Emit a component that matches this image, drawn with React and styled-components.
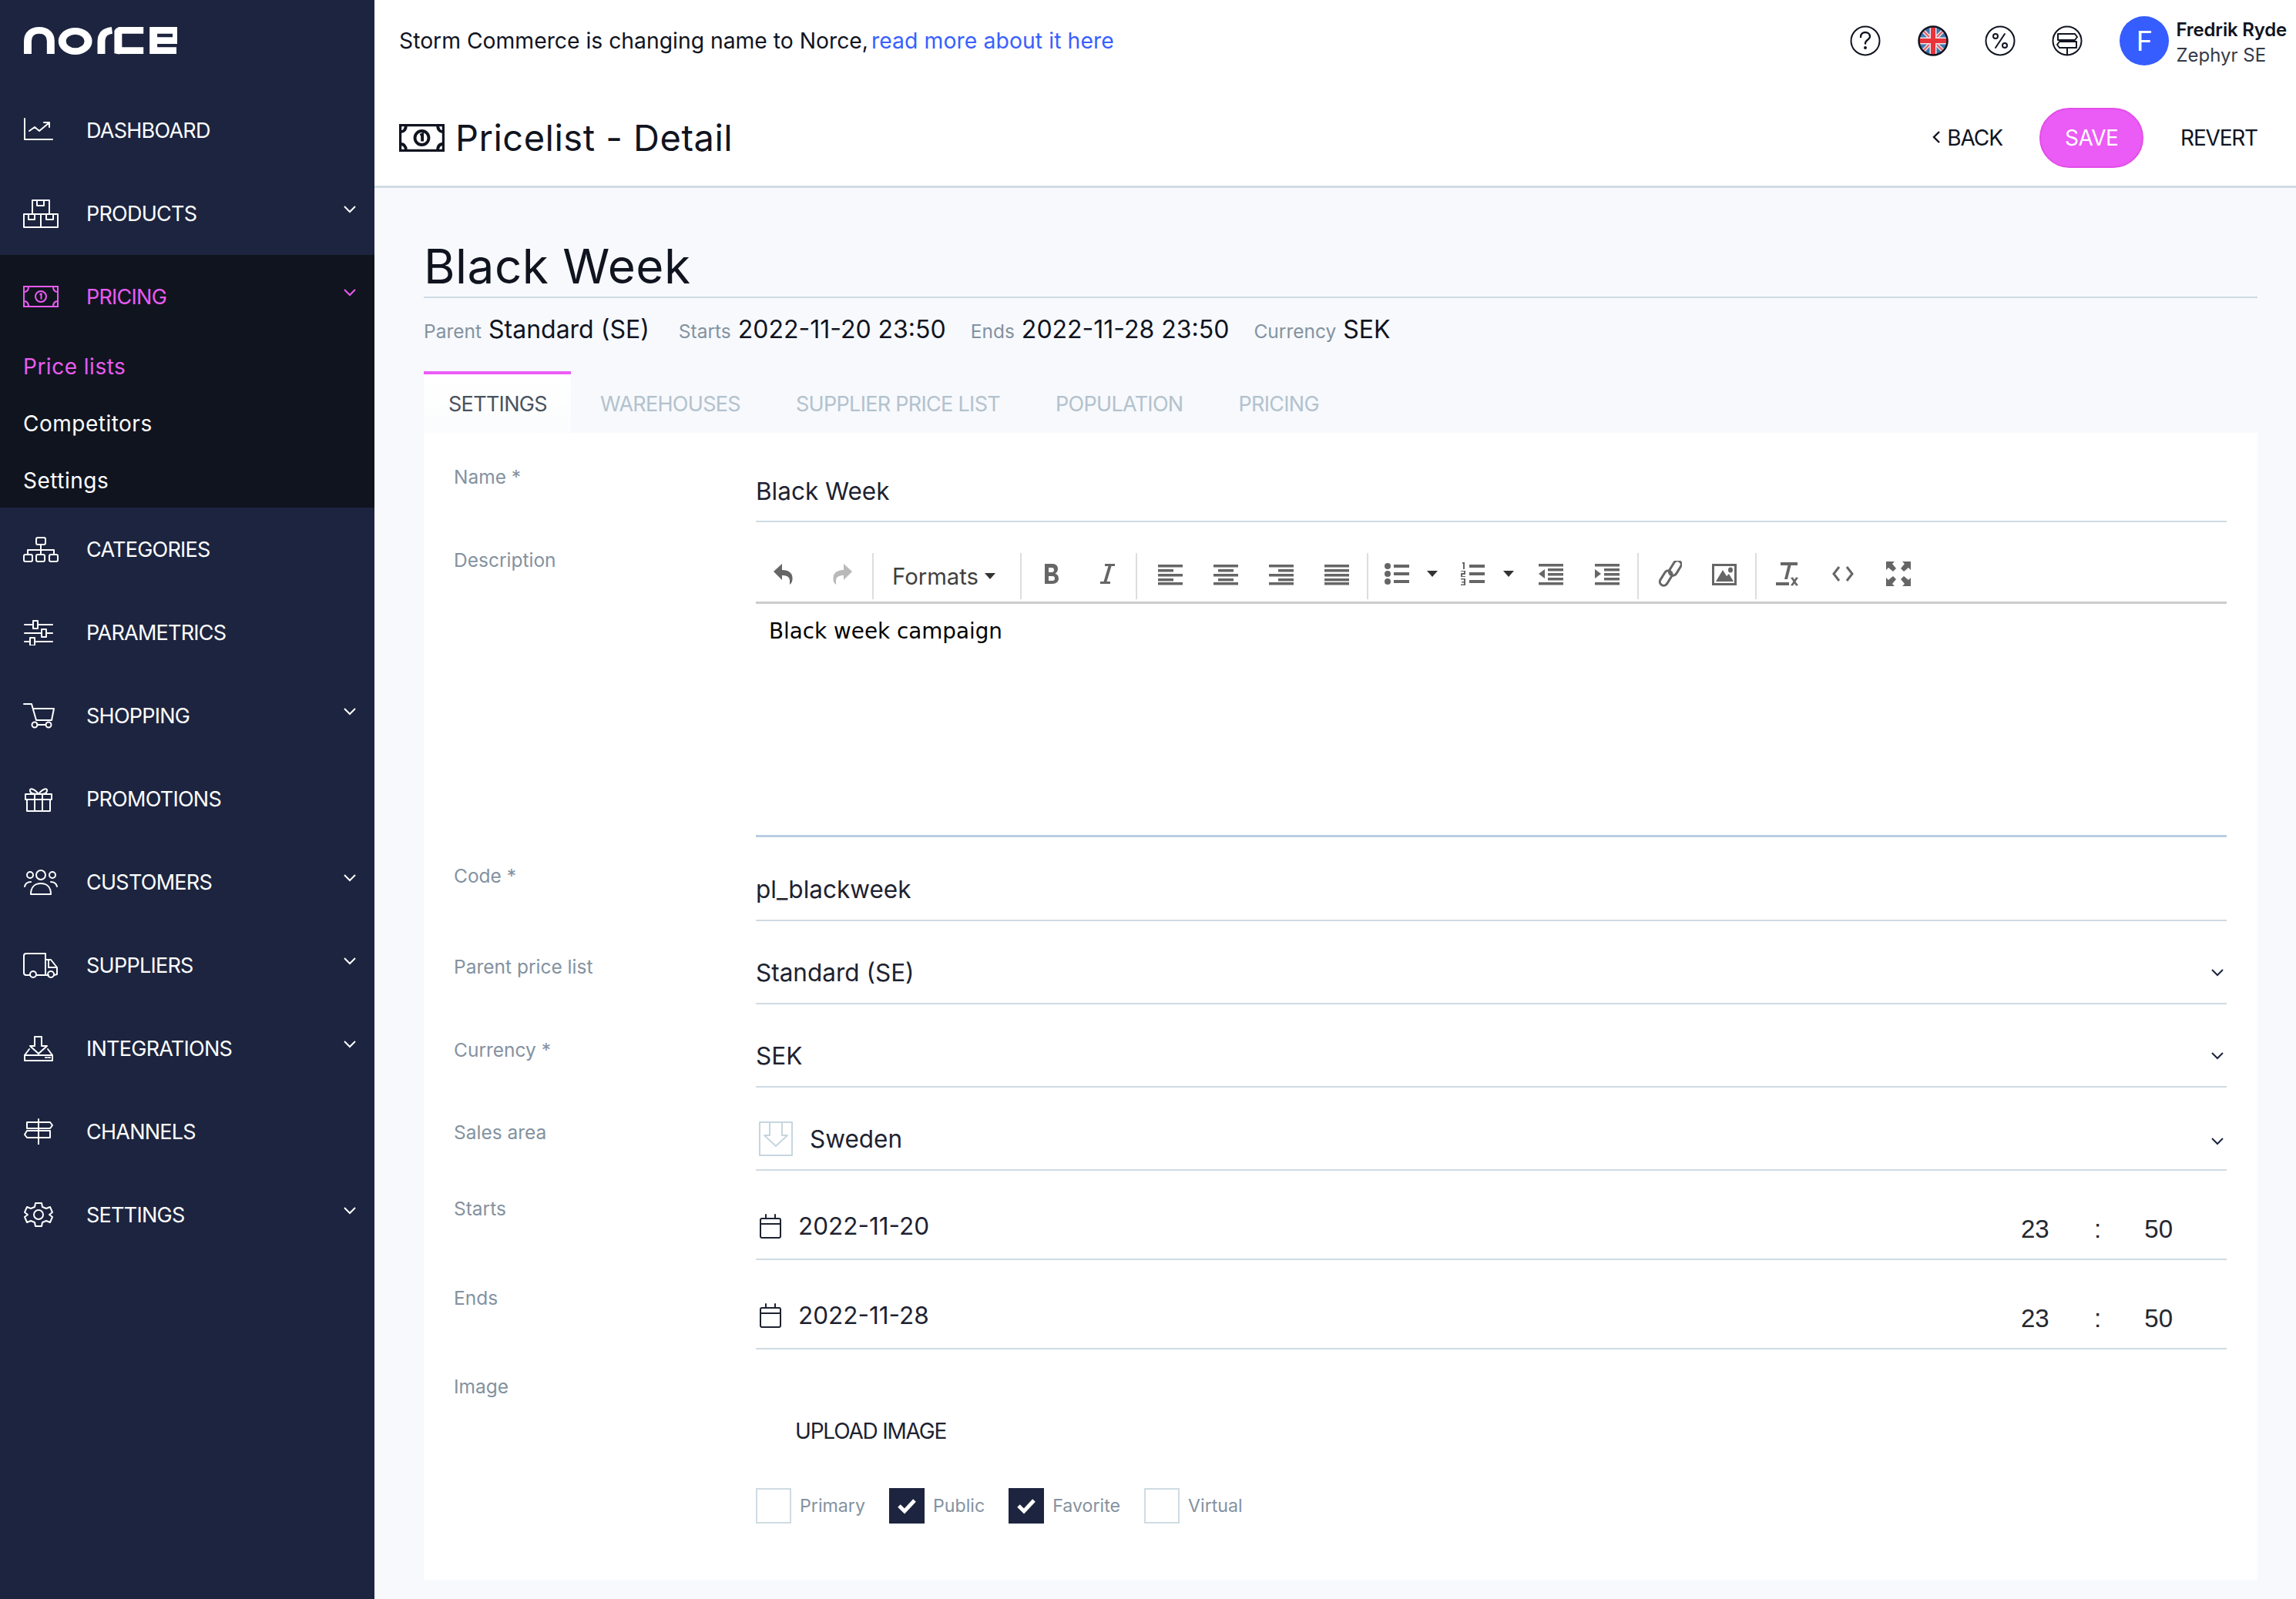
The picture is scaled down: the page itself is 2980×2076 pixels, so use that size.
import React from 'react';
import styled, { createGlobalStyle } from 'styled-components';

const Global = createGlobalStyle`
  html, body { margin: 0; padding: 0; background: #f7f9fd; }
  body { font-family: Inter, "Noto Sans", sans-serif; color: #10141f; }
  * { box-sizing: border-box; }
`;

const Shell = styled.div`display: flex; width: 2980px; height: 2076px; overflow: hidden;`;
const Sidebar = styled.nav`width: 486px; flex: none; background: #1c243f; display: flex; flex-direction: column;`;
const LogoBar = styled.div`height: 115px; padding: 35px 0 0 31px;`;
const NavRow = styled.div`
  height: 108px; flex: none; display: flex; align-items: center; padding: 0 24px 0 30px;
  color: ${p => (p.$active ? '#e95bf0' : '#ffffff')};
`;
const NavIcon = styled.span`width: 46px; height: 34px; flex: none; display: flex; align-items: center;`;
const NavLabel = styled.span`margin-left: 36px; padding-top: 1px; flex: 1; font-size: 27px; letter-spacing: -0.75px;`;
const NavChevron = styled.span`display: flex; margin-top: -10px;`;
const ActiveGroup = styled.div`height: 328px; background: #10141f; display: flex; flex-direction: column;`;
const SubList = styled.div`display: flex; flex-direction: column;`;
const SubItem = styled.div`height: 74px; display: flex; align-items: center; padding-left: 30px; font-size: 28px; letter-spacing: 0.5px; color: ${p => (p.$active ? '#e95bf0' : '#fff')};`;

const Main = styled.main`flex: 1; min-width: 0; display: flex; flex-direction: column; background: #f7f9fd;`;
const Header = styled.header`height: 244px; flex: none; background: #fff; border-bottom: 3px solid #cfdbe3;`;
const Banner = styled.div`height: 106px; display: flex; align-items: center; padding: 0 12px 0 32px;`;
const BannerText = styled.div`flex: 1; font-size: 28.3px; color: #10141f;`;
const BannerLink = styled.span`color: #3860ff; margin-left: -4px; letter-spacing: 0.1px;`;
const TopIcons = styled.div`display: flex; align-items: center; gap: 47.4px; margin-right: 48px;`;
const User = styled.div`display: flex; align-items: center; gap: 9px;`;
const Avatar = styled.div`width: 64px; height: 64px; border-radius: 50%; background: #355dff; color: #fff; display: flex; align-items: center; justify-content: center; font-size: 36px;`;
const UserText = styled.div`display: flex; flex-direction: column; gap: 3px; padding-top: 5px;`;
const UserName = styled.div`font-size: 24px; font-weight: 600; line-height: 30px; letter-spacing: -0.2px;`;
const UserCompany = styled.div`font-size: 24px; line-height: 30px; color: #333a48;`;
const TitleRow = styled.div`height: 135px; display: flex; align-items: center; padding: 10px 50px 0 32px;`;
const PageTitle = styled.h1`flex: 1; margin: 0; display: flex; align-items: center; gap: 14px; font-size: 47px; font-weight: 400; letter-spacing: 0.5px;`;
const BackLink = styled.div`display: flex; align-items: center; gap: 8px; font-size: 28px; letter-spacing: -1px;`;
const SaveButton = styled.button`
  width: 135px; height: 78px; margin: 0 48px 0 48px; border-radius: 39px; border: 2px solid #e24ee8; background: #eb5bf5; color: #fff;
  font: 400 28px Inter, sans-serif; letter-spacing: -0.6px; padding: 0;
`;
const RevertLink = styled.div`font-size: 28px; letter-spacing: -1.2px;`;

const Content = styled.div`flex: 1; padding: 0 50px 0 64px; display: flex; flex-direction: column;`;
const Heading = styled.h2`height: 143px; margin: 0; display: flex; align-items: flex-end; font-size: 62px; font-weight: 400; line-height: 78px; border-bottom: 2px solid #cfdbe3; letter-spacing: 0.5px;`;
const Meta = styled.div`height: 95px; padding-bottom: 15px; display: flex; align-items: center;`;
const MetaItem = styled.div`display: flex; align-items: baseline; gap: 9px; margin-right: ${p => p.$mr || 32}px;`;
const MetaLabel = styled.span`font-size: 24.5px; color: #8492a0;`;
const MetaValue = styled.span`font-size: 32px;`;
const Tabs = styled.div`height: 80px; flex: none; display: flex;`;
const Tab = styled.div`
  height: 80px; padding: 0 ${p => (p.$active ? '32px' : '36px')}; margin-right: ${p => (p.$active ? '2px' : '0')}; display: flex; align-items: center;
  font-size: 27px; letter-spacing: -0.7px;
  color: ${p => (p.$active ? '#4a5260' : '#b3c2cd')};
  border-top: ${p => (p.$active ? '4px solid #eb5bf5' : '4px solid transparent')};
  background: ${p => (p.$active ? 'linear-gradient(#fff, #fbfcfd)' : 'transparent')};
  width: ${p => p.$w}px;
`;
const Card = styled.section`height: 1489px; flex: none; background: #fff; padding: 0 40px 0 39px; display: flex; flex-direction: column;`;
const Row = styled.div`display: grid; grid-template-columns: 392px 1fr; height: ${p => p.$h}px; flex: none;`;
const Label = styled.div`font-size: 24.5px; color: #8492a0; line-height: 30px; padding-top: ${p => p.$top}px;`;
const Control = styled.div`
  display: flex; align-items: flex-end; justify-content: space-between; padding-bottom: ${p => p.$pad || 20}px;
  border-bottom: 2px solid #cfdbe3; font-size: 31.5px; line-height: 38px; color: #1d2230;
`;
const Value = styled.span`flex: 1; display: flex; align-items: center; gap: ${p => p.$gap || 0}px;`;
const ChevronBox = styled.span`display: flex; margin: 0 4px ${p => p.$b}px 0;`;
const GlyphSlot = styled.span`display: flex; margin-left: 4px;`;
const TimeGroup = styled.div`display: flex; width: 197px; margin-right: 70px; font-family: "Liberation Sans", sans-serif; font-size: 33px; color: #252830; transform: translateY(4px);`;
const TimePart = styled.span`width: ${p => p.$w}px; text-align: ${p => p.$align};`;

const Editor = styled.div`display: flex; flex-direction: column; border-bottom: 3px solid #b9cde0;`;
const Toolbar = styled.div`margin-top: 40px; height: 66px; display: flex; padding-bottom: 4px; border-bottom: 3px solid #ccc;`;
const Sep = styled.span`width: 2px; height: 60px; background: #ddd; flex: none; margin: 0 ${p => p.$r || 0}px 0 ${p => p.$l || 0}px;`;
const ToolBtn = styled.span`width: ${p => p.$w || 72}px; height: 54px; flex: none; display: flex; align-items: center; justify-content: center;`;
const FormatsBtn = styled.span`width: 190px; padding-left: 24px; height: 60px; flex: none; display: flex; align-items: center; gap: 8px; font-size: 29.3px; color: #404040;`;
const Caret = styled.i`width: 0; height: 0; border-left: 7px solid transparent; border-right: 7px solid transparent; border-top: 8px solid #333; display: block;`;
const EditorBody = styled.div`flex: 1; padding: 16px 0 0 17px; font-family: "DejaVu Sans", sans-serif; font-size: 27.8px; line-height: 40px; color: #000;`;
const Upload = styled.div`font-size: 28px; letter-spacing: -1.2px; color: #1d2230; padding: 88px 0 0 51px; line-height: 36px;`;
const Checks = styled.div`display: flex; align-items: center; margin-top: 56px;`;
const Check = styled.label`display: flex; align-items: center; gap: 11px; margin-right: 31px; font-size: 23.2px; color: #8492a0;`;
const Box = styled.span`width: 46px; height: 46px; display: flex; align-items: center; justify-content: center; border: ${p => (p.$on ? 'none' : '2px solid #cfdbe3')}; background: ${p => (p.$on ? '#1c243f' : '#fff')};`;

const S = ({ w = 46, h = 34, sw = 2, color = 'currentColor', children, vb }) => (
  <svg width={w} height={h} viewBox={vb || `0 0 ${w} ${h}`} fill="none" stroke={color} strokeWidth={sw} strokeLinejoin="round" strokeLinecap="round">{children}</svg>
);

const Logo = () => (
  <svg width="199" height="36" viewBox="0 0 200 41" fill="none" stroke="#fff" strokeWidth="10" preserveAspectRatio="none">
    <path d="M5 40V21C5 11 11 5 20 5s15 6 15 16v19" />
    <ellipse cx="67" cy="21" rx="17" ry="15" />
    <path d="M101 40V22C101 11 106 6 115 5" />
    <path d="M156 5h-31a4 4 0 0 0-2 2v28a4 4 0 0 0 2 0h31" strokeLinejoin="miter" />
    <path d="M199 35h-30V5h30v15h-30" />
  </svg>
);

const Money = ({ w = 46, h = 28, sw = 2, color = 'currentColor' }) => (
  <svg width={w} height={h} viewBox="0 0 46 28" fill="none" stroke={color} strokeWidth={sw} preserveAspectRatio="none">
    <rect x="1" y="1" width="44" height="26" />
    <path d="M1 8q6 0 6-7M39 1q0 7 6 7M1 20q6 0 6 7M39 27q0-7 6-7" />
    <circle cx="23" cy="14" r="7" />
    <path d="M21.500 11.500l2-1v7" />
  </svg>
);

const IconDashboard = () => <S><path d="M2 2v27h36" /><path d="M8 18l7-5 6 5 12-10M27 7h7v6" /></S>;
const IconProducts = () => <S h={38}><path d="M1 20h44v17H1zM23 20v17M12 2h22v18M12 2v18" /><path d="M18 2v7h9V2M7 20v7h8v-7M30 20v7h9v-7" /></S>;
const IconCategories = () => <S><rect x="17" y="2" width="12" height="9" rx="2" /><rect x="1" y="24" width="11" height="9" rx="2" /><rect x="17" y="24" width="11" height="9" rx="2" /><rect x="34" y="24" width="11" height="9" rx="2" /><path d="M23 11v13M6 24v-6h34v6" /></S>;
const IconParam = () => <S><path d="M2 7h36M2 18h36M2 29h36" /><rect x="13" y="2" width="6" height="10" fill="#1c243f" /><rect x="24" y="13" width="6" height="10" fill="#1c243f" /><rect x="9" y="24" width="6" height="10" fill="#1c243f" /></S>;
const IconCart = () => <S><path d="M1 2h10l6 21h20l3-15H13" /><circle cx="15" cy="29" r="3.5" /><circle cx="33" cy="29" r="3.5" /><path d="M18 29h11" /></S>;
const IconGift = () => <S><path d="M3 11h34v7H3zM5 18v15h30V18M15 11v22M25 11v22" /><path d="M20 11C14 3 8 3 9 7s6 4 11 4c6 0 10 0 11-4s-5-4-11 4" /></S>;
const IconCustomers = () => <S><circle cx="23" cy="8" r="6" /><circle cx="9" cy="8" r="4" /><circle cx="38" cy="8" r="4" /><path d="M10 33c0-9 5-14 13-14s13 5 13 14zM2 23c1-4 4-6 8-6M44 23c-1-4-4-6-8-6" /></S>;
const IconTruck = () => <S><path d="M9 30H4a3 3 0 0 1-3-3V5a3 3 0 0 1 3-3h25v28H17M29 10h7l8 10v9l-4 1M33 30h-4" /><circle cx="13" cy="29" r="4" /><circle cx="36" cy="29" r="4" /><path d="M33 11v9h10" /></S>;
const IconIntegrations = () => <S><path d="M15 2h9v12h7L20 24 9 14h6zM8 18l-6 8v7h36v-7l-6-8" /><path d="M2 26h36M29 29h2M33 29h2" /></S>;
const IconChannels = () => <S><path d="M20 1v33M5 5h30l3 4-3 4H5zM35 16H5l-3 5 3 4h30z" /></S>;
const IconGear = () => <S><circle cx="20" cy="17" r="6" /><path d="M16 2h8l1 5 5 2 5-2 3 7-4 3 4 3-3 7-5-2-5 2-1 5h-8l-1-5-5-2-5 2-3-7 4-3-4-3 3-7 5 2 5-2z" /></S>;

const Chevron = ({ color = 'currentColor' }) => (
  <svg width="16" height="10" viewBox="0 0 16 10" fill="none" stroke={color} strokeWidth="2"><path d="M1 1l7 7 7-7" /></svg>
);

const HelpIcon = () => <S w={40} h={40}><circle cx="20" cy="20" r="18.5" stroke="#10141f" /><path d="M14 15c0-4 3-6 6-6s6 2 6 5.5c0 4-6 4-6 9" stroke="#10141f" strokeWidth="2.4" /><circle cx="20" cy="29" r="1" stroke="#10141f" strokeWidth="2" /></S>;
const Flag = () => (
  <svg width="40" height="40" viewBox="0 0 40 40">
    <defs><clipPath id="fc"><circle cx="20" cy="20" r="18" /></clipPath></defs>
    <g clipPath="url(#fc)">
      <rect width="40" height="40" fill="#3d78b0" />
      <path d="M0 0L40 40M40 0L0 40" stroke="#ecdfe3" strokeWidth="5" />
      <path d="M0 0L40 40M40 0L0 40" stroke="#e8606a" strokeWidth="2" />
      <path d="M20 0V40M0 20H40" stroke="#f3e4e6" strokeWidth="9" />
      <path d="M20 0V40M0 20H40" stroke="#e8343a" strokeWidth="6" />
    </g>
    <circle cx="20" cy="20" r="18.5" fill="none" stroke="#10141f" strokeWidth="2.5" />
  </svg>
);
const PercentIcon = () => <S w={40} h={40} color="#10141f"><circle cx="20" cy="20" r="18.5" /><path d="M26 11L14 29" /><circle cx="14" cy="14" r="3" /><circle cx="26" cy="26" r="3" /></S>;
const SignIcon = () => <S w={40} h={40} color="#10141f"><circle cx="20" cy="20" r="18.5" /><path d="M8 11h22l3 4-3 4H8zM32 21H10l-3 4 3 4h22zM20 29v9" /></S>;
const BackChev = () => <svg width="12" height="20" viewBox="0 0 12 20" fill="none" stroke="#10141f" strokeWidth="2.4"><path d="M10 2L3 9l7 7" /></svg>;

const G = ({ o = 1, children, w = 32, h = 32 }) => <svg width={w} height={h} viewBox="0 0 32 32" fill="#666" opacity={o}>{children}</svg>;
const Bars = ({ rows }) => rows.map(([x, y, w, h = 3.5], i) => <rect key={i} x={x} y={y} width={w} height={h} />);
const Undo = ({ o }) => <G o={o}><path d="M14 3L3 13l11 11v-6c6 0 10 2 10 7v5c4-3 4-8 3-12-2-5-7-7-13-7z" /></G>;
const Redo = ({ o }) => <G o={o}><path d="M18 3l11 10-11 11v-6c-6 0-10 2-10 7v5c-4-3-4-8-3-12 2-5 7-7 13-7z" /></G>;
const Bold = () => <G><path fillRule="evenodd" d="M8 3h10c5 0 7 3 7 6.500 0 3-1.500 5-3.500 6 2.500 1 4.500 3 4.500 6.500 0 4-3 7-8 7H8zM13 8v6h4c2 0 3-1 3-3s-1-3-3-3zM13 19v6h5c2 0 3-1 3-3s-1-3-3-3z" /></G>;
const Italic = () => <G><path d="M12 3h13v3h-4.500l-6 20H19v3H6v-3h4.500l6-20H12z" /></G>;
const AlignL = () => <G><Bars rows={[[0, 4, 32], [0, 10, 20], [0, 16, 32], [0, 22, 20], [0, 27, 32]]} /></G>;
const AlignC = () => <G><Bars rows={[[0, 4, 32], [6, 10, 20], [0, 16, 32], [6, 22, 20], [0, 27, 32]]} /></G>;
const AlignR = () => <G><Bars rows={[[0, 4, 32], [12, 10, 20], [0, 16, 32], [12, 22, 20], [0, 27, 32]]} /></G>;
const AlignJ = () => <G><Bars rows={[[0, 4, 32], [0, 10, 32], [0, 16, 32], [0, 22, 32], [0, 27, 32]]} /></G>;
const Bullets = () => <G><circle cx="4" cy="6" r="4" /><circle cx="4" cy="16" r="4" /><circle cx="4" cy="26" r="4" /><Bars rows={[[12, 4, 20, 4], [12, 14, 20, 4], [12, 24, 20, 4]]} /></G>;
const Numbers = () => <G><Bars rows={[[12, 4, 20, 4], [12, 14, 20, 4], [12, 24, 20, 4]]} /><path d="M3 1h3v9H4V3H3zM1 12h6v5H3v2h4v1H1v-5h4v-2H1zM1 22h6v9H1v-1.500h4v-2H2v-1.500h3v-2.500H1z" /></G>;
const Outdent = () => <G><Bars rows={[[0, 3, 32], [12, 9, 20], [12, 15, 20], [12, 21, 20], [0, 27, 32]]} /><path d="M8 10v12L0 16z" /></G>;
const Indent = () => <G><Bars rows={[[0, 3, 32], [12, 9, 20], [12, 15, 20], [12, 21, 20], [0, 27, 32]]} /><path d="M0 10v12l8-6z" /></G>;
const LinkI = () => (
  <svg width="34" height="34" viewBox="0 0 34 34" fill="none" stroke="#666" strokeWidth="3">
    <rect x="4" y="-1" width="10" height="21" rx="5" transform="translate(4 13) rotate(32 9 10)" />
    <rect x="4" y="-1" width="10" height="21" rx="5" transform="translate(16 0) rotate(32 9 10)" />
  </svg>
);
const ImageI = () => <G><path fillRule="evenodd" d="M0 3h32v28H0zM3 6v22h26V6z" /><path d="M5 26l9-15 5 8 3-3 6 10z" /><ellipse cx="24" cy="11" rx="3" ry="3.500" /></G>;
const ClearI = () => <G><path d="M7 1h22v4h-8.500L16 23h-4l4.500-18H7zM1 27h17v4H1zM20 21l3-.5 2 3 2-3 3 .5-3.500 5 3.500 5-3 .5-2-3-2 3-3-.5 3.500-5z" /></G>;
const CodeI = () => <svg width="28" height="22" viewBox="0 0 28 22" fill="none" stroke="#666" strokeWidth="3"><path d="M9 2l-7 9 7 9M19 2l7 9-7 9" /></svg>;
const FullI = () => <G><path d="M0 0h11l-3 3 5 6-4 4-6-5-3 3zM32 0v11l-3-3-6 5-4-4 5-6-3-3zM0 32V21l3 3 6-5 4 4-5 6 3 3zM32 32H21l3-3-5-6 4-4 6 5 3-3z" /></G>;
const Calendar = () => <S w={30} h={32} color="#1d2230"><rect x="2" y="6" width="26" height="25" rx="2" /><path d="M2 13h26M9 1v5M21 1v5" /></S>;
const Placeholder = () => <S w={44} h={45} color="#c6d6df"><rect x="1" y="1" width="42" height="43" /><path d="M14 1v17H7l15 14 15-14h-7V1" /></S>;
const Tick = () => <svg width="26" height="22" viewBox="0 0 26 22" fill="none" stroke="#fff" strokeWidth="5"><path d="M3 11l7 7L23 4" /></svg>;

const NavItem = ({ icon, label, chevron, active }) => (
  <NavRow $active={active}>
    <NavIcon>{icon}</NavIcon>
    <NavLabel>{label}</NavLabel>
    {chevron && <NavChevron><Chevron /></NavChevron>}
  </NavRow>
);

const MetaField = ({ label, value, mr }) => (
  <MetaItem $mr={mr}><MetaLabel>{label}</MetaLabel><MetaValue>{value}</MetaValue></MetaItem>
);

const Field = ({ h, top, label, children, pad }) => (
  <Row $h={h}>
    <Label $top={top}>{label}</Label>
    <Control $pad={pad}>{children}</Control>
  </Row>
);

const SelectValue = ({ children, gap, chevB = 14 }) => (
  <>
    <Value $gap={gap}>{children}</Value>
    <ChevronBox $b={chevB}><Chevron color="#1c243f" /></ChevronBox>
  </>
);

const DateValue = ({ date }) => (
  <>
    <Value $gap={21}><GlyphSlot><Calendar /></GlyphSlot>{date}</Value>
    <TimeGroup>
      <TimePart $w={95} $align="left">23</TimePart>
      <TimePart $w={39} $align="left">:</TimePart>
      <TimePart $w={63} $align="right">50</TimePart>
    </TimeGroup>
  </>
);

export default function App() {
  return (
    <>
      <Global />
      <Shell>
        <Sidebar>
          <LogoBar><Logo /></LogoBar>
          <NavItem icon={<IconDashboard />} label="DASHBOARD" />
          <NavItem icon={<IconProducts />} label="PRODUCTS" chevron />
          <ActiveGroup>
            <NavItem active icon={<Money />} label="PRICING" chevron />
            <SubList>
              <SubItem $active>Price lists</SubItem>
              <SubItem>Competitors</SubItem>
              <SubItem>Settings</SubItem>
            </SubList>
          </ActiveGroup>
          <NavItem icon={<IconCategories />} label="CATEGORIES" />
          <NavItem icon={<IconParam />} label="PARAMETRICS" />
          <NavItem icon={<IconCart />} label="SHOPPING" chevron />
          <NavItem icon={<IconGift />} label="PROMOTIONS" />
          <NavItem icon={<IconCustomers />} label="CUSTOMERS" chevron />
          <NavItem icon={<IconTruck />} label="SUPPLIERS" chevron />
          <NavItem icon={<IconIntegrations />} label="INTEGRATIONS" chevron />
          <NavItem icon={<IconChannels />} label="CHANNELS" />
          <NavItem icon={<IconGear />} label="SETTINGS" chevron />
        </Sidebar>
        <Main>
          <Header>
            <Banner>
              <BannerText>Storm Commerce is changing name to Norce, <BannerLink>read more about it here</BannerLink></BannerText>
              <TopIcons><HelpIcon /><Flag /><PercentIcon /><SignIcon /></TopIcons>
              <User>
                <Avatar>F</Avatar>
                <UserText><UserName>Fredrik Ryde</UserName><UserCompany>Zephyr SE</UserCompany></UserText>
              </User>
            </Banner>
            <TitleRow>
              <PageTitle><Money w={59} h={36} sw={3} color="#10141f" />Pricelist - Detail</PageTitle>
              <BackLink><BackChev />BACK</BackLink>
              <SaveButton>SAVE</SaveButton>
              <RevertLink>REVERT</RevertLink>
            </TitleRow>
          </Header>
          <Content>
            <Heading>Black Week</Heading>
            <Meta>
              <MetaField label="Parent" value="Standard (SE)" mr={38} />
              <MetaField label="Starts" value="2022-11-20 23:50" />
              <MetaField label="Ends" value="2022-11-28 23:50" />
              <MetaField label="Currency" value="SEK" />
            </Meta>
            <Tabs>
              <Tab $active $w={191}>SETTINGS</Tab>
              <Tab>WAREHOUSES</Tab>
              <Tab>SUPPLIER PRICE LIST</Tab>
              <Tab>POPULATION</Tab>
              <Tab>PRICING</Tab>
            </Tabs>
            <Card>
              <Field h={116} top={42} label="Name *" pad={19}>Black Week</Field>
              <Row $h={409}>
                <Label $top={34}>Description</Label>
                <Editor>
                  <Toolbar>
                    <ToolBtn $w={72}><Undo /></ToolBtn>
                    <ToolBtn $w={79}><Redo o={0.45} /></ToolBtn>
                    <Sep />
                    <FormatsBtn>Formats<Caret /></FormatsBtn>
                    <Sep />
                    <ToolBtn $w={76}><Bold /></ToolBtn>
                    <ToolBtn><Italic /></ToolBtn>
                    <Sep $r={7} />
                    <ToolBtn><AlignL /></ToolBtn>
                    <ToolBtn><AlignC /></ToolBtn>
                    <ToolBtn><AlignR /></ToolBtn>
                    <ToolBtn><AlignJ /></ToolBtn>
                    <Sep $l={3} $r={6} />
                    <ToolBtn $w={61}><Bullets /></ToolBtn>
                    <ToolBtn $w={32}><Caret /></ToolBtn>
                    <ToolBtn $w={72}><Numbers /></ToolBtn>
                    <ToolBtn $w={22}><Caret /></ToolBtn>
                    <ToolBtn $w={88}><Outdent /></ToolBtn>
                    <ToolBtn $w={58}><Indent /></ToolBtn>
                    <Sep $l={10} $r={3} />
                    <ToolBtn><LinkI /></ToolBtn>
                    <ToolBtn><ImageI /></ToolBtn>
                    <Sep $l={4} $r={4} />
                    <ToolBtn><ClearI /></ToolBtn>
                    <ToolBtn><CodeI /></ToolBtn>
                    <ToolBtn><FullI /></ToolBtn>
                  </Toolbar>
                  <EditorBody>Black week campaign</EditorBody>
                </Editor>
              </Row>
              <Field h={109} top={35} label="Code *">pl_blackweek</Field>
              <Field h={108} top={44} label="Parent price list"><SelectValue>Standard (SE)</SelectValue></Field>
              <Field h={108} top={44} label="Currency *"><SelectValue>SEK</SelectValue></Field>
              <Field h={108} top={43} label="Sales area" pad={17}><SelectValue gap={22} chevB={14}><GlyphSlot><Placeholder /></GlyphSlot>Sweden</SelectValue></Field>
              <Field h={116} top={34} label="Starts" pad={23}><DateValue date="2022-11-20" /></Field>
              <Field h={116} top={34} label="Ends" pad={23}><DateValue date="2022-11-28" /></Field>
              <Row $h={280}>
                <Label $top={33}>Image</Label>
                <div>
                  <Upload>UPLOAD IMAGE</Upload>
                  <Checks>
                    <Check><Box />Primary</Check>
                    <Check><Box $on><Tick /></Box>Public</Check>
                    <Check><Box $on><Tick /></Box>Favorite</Check>
                    <Check><Box />Virtual</Check>
                  </Checks>
                </div>
              </Row>
            </Card>
          </Content>
        </Main>
      </Shell>
    </>
  );
}
